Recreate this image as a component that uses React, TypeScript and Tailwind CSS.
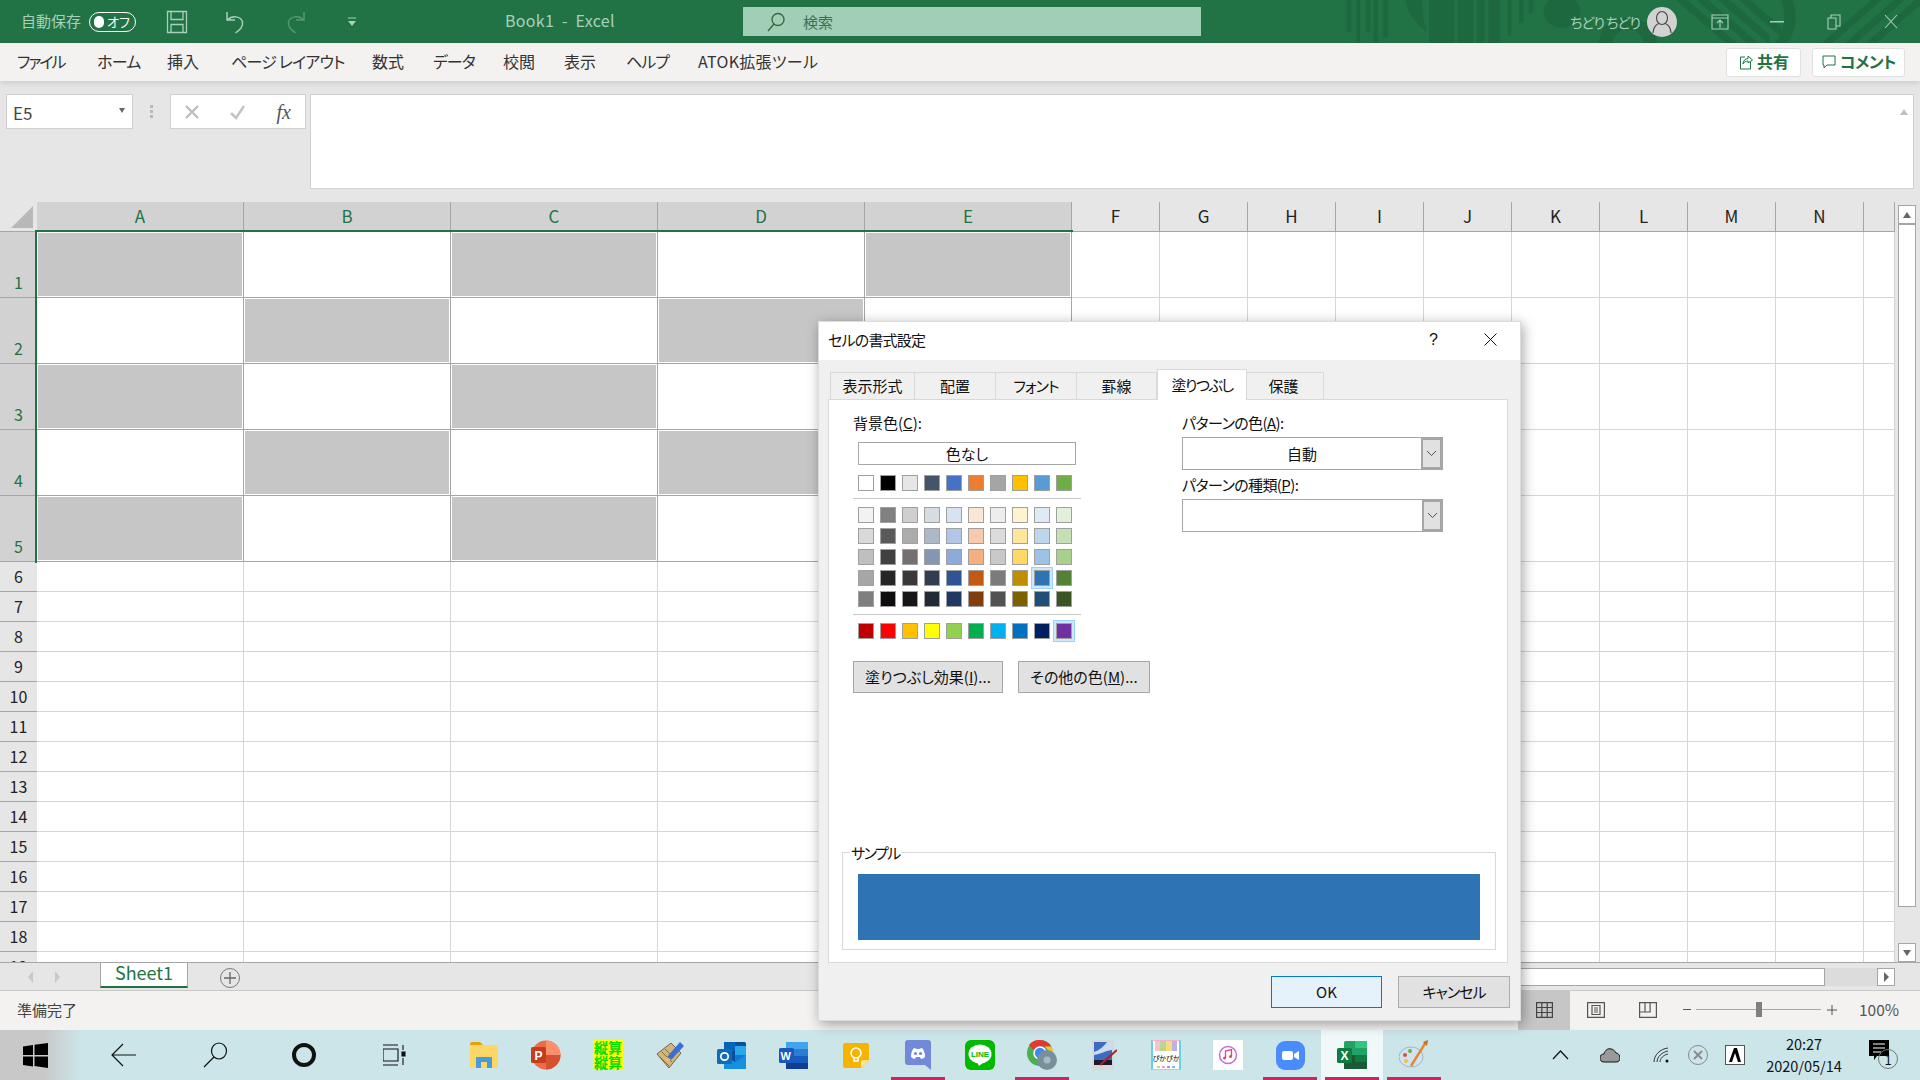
import React from "react";

const COLS = ["A", "B", "C", "D", "E", "F", "G", "H", "I", "J", "K", "L", "M", "N", ""];
const THEME = ["#ffffff", "#000000", "#e7e6e6", "#44546a", "#4472c4", "#ed7d31", "#a5a5a5", "#ffc000", "#5b9bd5", "#70ad47"];
const TINTS = [
  ["#f2f2f2", "#808080", "#d0cece", "#d6dce4", "#d9e2f3", "#fbe5d5", "#ededed", "#fff2cc", "#deeaf6", "#e2efd9"],
  ["#d9d9d9", "#595959", "#aeabab", "#adb9ca", "#b4c6e7", "#f7caac", "#dbdbdb", "#fee599", "#bdd6ee", "#c5e0b3"],
  ["#bfbfbf", "#404040", "#757070", "#8496b0", "#8eaadb", "#f4b083", "#c9c9c9", "#ffd965", "#9cc2e5", "#a8d08d"],
  ["#a6a6a6", "#262626", "#3a3838", "#323e4f", "#2f5496", "#c45911", "#7b7b7b", "#bf8f00", "#2e74b5", "#538135"],
  ["#7f7f7f", "#0d0d0d", "#171616", "#222a35", "#1f3864", "#833c0b", "#525252", "#7f6000", "#1f4e79", "#375623"],
];
const STD = ["#c00000", "#ff0000", "#ffc000", "#ffff00", "#92d050", "#00b050", "#00b0f0", "#0070c0", "#002060", "#7030a0"];
const TABS = [
  { t: "ファイル", c: "w-[80px] tracking-[-2px]" },
  { t: "ホーム", c: "w-[70px] tracking-[-0.7px]" },
  { t: "挿入", c: "w-[64px]" },
  { t: "ページ レイアウト", c: "w-[141px] tracking-[-0.8px]" },
  { t: "数式", c: "w-[61px]" },
  { t: "データ", c: "w-[70px] tracking-[-1px]" },
  { t: "校閲", c: "w-[61px]" },
  { t: "表示", c: "w-[62px]" },
  { t: "ヘルプ", c: "w-[72px] tracking-[-1px]" },
  { t: "ATOK拡張ツール", c: "w-[125px] tracking-[0.3px]" },
];

function Swatch({ color, selected }: { color: string; selected?: boolean }) {
  return (
    <div
      className={
        selected
          ? "w-4 h-4 border border-[#a0a0a0] shadow-[0_0_0_2px_#cce8ff,0_0_0_3px_#99d1ff]"
          : "w-4 h-4 border border-[#a0a0a0]"
      }
      style={{ backgroundColor: color }}
    />
  );
}

function SwatchRow({ colors, selected }: { colors: string[]; selected?: number }) {
  return (
    <div className="flex gap-[6px]">
      {colors.map((c, i) => (
        <Swatch key={i} color={c} selected={selected === i} />
      ))}
    </div>
  );
}

function TitlePattern() {
  return (
    <svg className="absolute left-[1320px] top-0 w-[600px] h-[43px]" viewBox="0 0 1568 129" preserveAspectRatio="none" fill="#1e6840">
      <path d="M70 0h12v95H70zM95 0h10v129H95zM120 0h11v95h-11zM140 0h12v129h-12zM165 0h13v113h-13z" />
      <path d="M222 0h45c-2 30 5 70 12 95c-28-20-50-60-57-95z" />
      <path d="M285 0h65v129h-65zM360 0h40v129h-40zM410 0h20v129h-20zM440 0h30v129h-30zM490 0h10v110h-10zM520 0h12v70h-12zM545 0h12v40h-12z" />
      <circle cx="632" cy="35" r="48" />
      <path d="M730 129c0-50 35-75 75-75s75 25 75 75h-35c0-25-20-40-40-40s-40 15-40 40z" />
      <path d="M930 0h30l130 129h-30zM985 0h30l130 129h-30zM1040 0h30l105 105v24h-5zM1095 0h30l80 80v30z" />
      <path d="M1205 0h30c15 45 10 95-15 129h-30c22-35 30-85 15-129z" />
      <path d="M1440 0h28L1340 129h-28zM1500 0h28L1400 129h-28zM1555 0h13v15L1455 129h-28z" />
    </svg>
  );
}

function TitleBar() {
  const c = "#a8d0ba";
  return (
    <div className="relative h-[43px] bg-[#217346] flex items-center text-[#a8d0ba] overflow-hidden shrink-0">
      <TitlePattern />
      <span className="relative ml-[21px] text-[15px] leading-none pb-[3px] w-[60px] whitespace-nowrap">自動保存</span>
      <div className="relative ml-[8px] w-[47px] h-[20px] rounded-full border-[1.5px] border-white flex items-center pl-[4px] gap-[3px]">
        <div className="w-[10px] h-[12px] rounded-full bg-white" />
        <span className="text-[13px] text-white leading-none">オフ</span>
      </div>
      <svg className="relative ml-[30px]" width="22" height="24" viewBox="0 0 22 24" fill="none" stroke={c} strokeWidth="1.3">
        <path d="M1.5 1.5h19v21h-19zM5 1.5v8h12v-8M5 22.5v-8h12v8" />
      </svg>
      <svg className="relative ml-[36px]" width="22" height="24" viewBox="0 0 22 24" fill="none" stroke={c} strokeWidth="1.5">
        <path d="M3 2v8h8M3.5 10C8 5 17 6 18.500 12c1 5-3 8-7 11" />
      </svg>
      <svg className="relative ml-[39px] opacity-40" width="22" height="24" viewBox="0 0 22 24" fill="none" stroke={c} strokeWidth="1.5">
        <path d="M19 2v8h-8M18.500 10C14 5 5 6 3.500 12c-1 5 3 8 7 11" />
      </svg>
      <svg className="relative ml-[39px]" width="12" height="12" viewBox="0 0 12 12" fill={c}>
        <path d="M2 1.500h8v1H2zM2 5h8L6 10z" />
      </svg>
      <span className="relative ml-[147px] w-[238px] text-[16px] tracking-[0.3px] leading-none pb-[3px] whitespace-pre">Book1  -  Excel</span>
      <div className="relative w-[458px] h-[29px] bg-[#a1cfb5] flex items-center text-[#3d6f54] text-[15px]">
        <svg className="ml-[23px]" width="20" height="20" viewBox="0 0 20 20" fill="none" stroke="#35694c" strokeWidth="1.4">
          <circle cx="12" cy="7.500" r="6" />
          <path d="M8 12L2 19" />
        </svg>
        <span className="ml-[17px] leading-none">検索</span>
      </div>
      <span className="relative ml-[369px] w-[64px] text-[14px] tracking-[-1px] leading-none whitespace-nowrap">ちどり ちどり</span>
      <div className="relative ml-[13px] w-[30px] h-[30px] rounded-full bg-[#d2d2d2] flex items-center justify-center">
        <svg width="22" height="24" viewBox="0 0 22 24" fill="none" stroke="#444" strokeWidth="1.1">
          <ellipse cx="11" cy="8" rx="5.500" ry="6.500" />
          <path d="M2 23c0-6 4-9 6-9.500M20 23c0-6-4-9-6-9.500" />
        </svg>
      </div>
      <svg className="relative ml-[34px]" width="18" height="16" viewBox="0 0 18 16" fill="none" stroke={c} strokeWidth="1.100">
        <path d="M1 1h16v14H1zM1 4h16M9 14V7M6 9l3-3 3 3" />
      </svg>
      <svg className="relative ml-[41px]" width="14" height="2" viewBox="0 0 14 2" fill={c}>
        <path d="M0 0h14v1.500H0z" />
      </svg>
      <svg className="relative ml-[43px]" width="14" height="16" viewBox="0 0 14 16" fill="none" stroke={c} strokeWidth="1.100">
        <path d="M1 4h8v11H1zM4 4V1h9v11H9" />
      </svg>
      <svg className="relative ml-[43px]" width="14" height="15" viewBox="0 0 14 15" fill="none" stroke={c} strokeWidth="1.100">
        <path d="M1 1l12 13M13 1L1 14" />
      </svg>
    </div>
  );
}

function RibbonTabs() {
  return (
    <div className="h-[38px] bg-[#f3f2f1] flex items-center pl-[17px] shrink-0 text-[#333] relative z-10 shadow-[0_2px_6px_rgba(0,0,0,0.12)]">
      <div className="flex text-[16px] pb-[2px]">
        {TABS.map((t) => (
          <span key={t.t} className={"whitespace-nowrap leading-none " + t.c}>{t.t}</span>
        ))}
      </div>
      <div className="ml-auto mr-[15px] flex gap-[11px] text-[#217346] font-bold text-[16px]">
        <div className="w-[75px] h-[29px] bg-white rounded-[3px] border border-[#e1e1e1] flex items-center justify-center gap-[3px]">
          <svg width="16" height="16" viewBox="0 0 16 16" fill="none" stroke="#217346" strokeWidth="1">
            <path d="M7 3H2.500v12h10V8M5 10c0-3 2-5.500 5-5.500V2l4.500 4-4.500 3V7c-2 0-4 1-5 3z" />
          </svg>
          <span className="leading-none pb-[2px]">共有</span>
        </div>
        <div className="w-[93px] h-[29px] bg-white rounded-[3px] border border-[#e1e1e1] flex items-center justify-center gap-[3px]">
          <svg width="16" height="16" viewBox="0 0 16 16" fill="none" stroke="#217346" strokeWidth="1">
            <path d="M2 2h12v9H6l-3 3v-3H2z" />
          </svg>
          <span className="leading-none pb-[2px] tracking-[-0.5px]">コメント</span>
        </div>
      </div>
    </div>
  );
}

function FormulaBar() {
  return (
    <div className="h-[121px] bg-[#e6e6e6] flex items-start pt-[13px] pl-[6px] shrink-0">
      <div className="w-[127px] h-[35px] bg-white border border-[#d0d0d0] flex items-center pl-[6px] pr-[7px] justify-between text-[#444]">
        <span className="text-[17px] leading-none pt-[2px]">E5</span>
        <span className="w-0 h-0 border-x-[3.500px] border-x-transparent border-t-[5px] border-t-[#666] mb-[3px]" />
      </div>
      <div className="w-[37px] h-[35px] flex flex-col items-center justify-center gap-[2px]">
        <span className="w-[3px] h-[3px] bg-[#b8b8b8]" />
        <span className="w-[3px] h-[3px] bg-[#b8b8b8]" />
        <span className="w-[3px] h-[3px] bg-[#b8b8b8]" />
      </div>
      <div className="w-[136px] h-[35px] bg-white border border-[#d0d0d0] flex items-center justify-between pl-[13px] pr-[14px]">
        <svg width="16" height="16" viewBox="0 0 16 16" fill="none" stroke="#b9b9b9" strokeWidth="2">
          <path d="M2 2l12 12M14 2L2 14" />
        </svg>
        <svg width="18" height="16" viewBox="0 0 18 16" fill="none" stroke="#c4c4c4" strokeWidth="2.500">
          <path d="M2 9l5 5L15 2" />
        </svg>
        <span className="font-['Liberation_Serif',serif] italic text-[20px] text-[#555] leading-none">fx</span>
      </div>
      <div className="relative ml-[4px] w-[1604px] h-[95px] bg-white border border-[#d0d0d0]">
        <span className="absolute right-[5px] top-[14px] w-0 h-0 border-x-[4px] border-x-transparent border-b-[6px] border-b-[#c0c0c0]" />
      </div>
    </div>
  );
}

function Sheet() {
  const rows = Array.from({ length: 19 }, (_, i) => i + 1);
  return (
    <div className="relative h-[760px] flex shrink-0 overflow-hidden">
      <div className="grid grid-cols-[37px_repeat(5,207px)_repeat(9,88px)_31px] grid-rows-[30px_repeat(5,66px)_repeat(14,30px)] w-[1895px] bg-white">
        <div className="bg-[#e6e6e6] relative border-b border-[#a6a6a6]">
          <div className="absolute left-[11px] top-[4px] w-[22px] h-[22px] bg-[#b8b8b8] [clip-path:polygon(100%_0,100%_100%,0_100%)]" />
        </div>
        {COLS.map((c, i) => (
          <div
            key={i}
            className={
              i < 5
                ? "bg-[#d2d2d2] border-r border-b border-[#a6a6a6] flex items-center justify-center text-[#217346] text-[17px] leading-none pb-[3px]"
                : "bg-[#e6e6e6] border-r border-b border-[#a6a6a6] flex items-center justify-center text-[#222] text-[17px] leading-none pb-[3px]"
            }
          >
            {c}
          </div>
        ))}
        {rows.map((r) => (
          <React.Fragment key={r}>
            <div
              className={
                r <= 5
                  ? "bg-[#d2d2d2] border-b border-[#a6a6a6] flex items-end justify-center text-[#217346] text-[16px] leading-[22px] pb-[4px]"
                  : "bg-[#e6e6e6] border-b border-[#a6a6a6] flex items-center justify-center text-[#222] text-[16px] leading-none pb-[2px]"
              }
            >
              {r}
            </div>
            {COLS.map((_, c) => {
              const inBlock = r <= 5 && c < 5;
              const gray = inBlock && (r - 1 + c) % 2 === 0;
              return (
                <div
                  key={c}
                  className={
                    inBlock
                      ? "border-r border-b border-[#a6a6a6] bg-white"
                      : "border-r border-b border-[#d6d6d6] bg-white"
                  }
                >
                  {gray && <div className="h-full border border-white bg-[#c6c6c6]" />}
                </div>
              );
            })}
          </React.Fragment>
        ))}
      </div>
      <div className="absolute left-[35px] top-[28px] w-[1038px] h-[333px] border-t-2 border-l-2 border-[#217346] pointer-events-none" />
      <div className="w-[25px] bg-[#e6e6e6] flex flex-col pl-[3px] pr-[4px] pt-[3px]">
        <div className="h-[19px] bg-white border border-[#a6a6a6] flex items-center justify-center">
          <span className="w-0 h-0 border-x-[4px] border-x-transparent border-b-[6px] border-b-[#666]" />
        </div>
        <div className="h-[683px] bg-white border border-[#a6a6a6] mt-0" />
        <div className="h-[36px]" />
        <div className="h-[19px] bg-white border border-[#a6a6a6] flex items-center justify-center">
          <span className="w-0 h-0 border-x-[4px] border-x-transparent border-t-[6px] border-t-[#666]" />
        </div>
      </div>
    </div>
  );
}

function SheetTabs() {
  return (
    <div className="h-[28px] bg-[#e6e6e6] border-t border-[#a6a6a6] flex items-start shrink-0">
      <div className="w-[100px] h-full flex items-center pl-[28px] gap-[22px]">
        <span className="w-0 h-0 border-y-[6px] border-y-transparent border-r-[5px] border-r-[#c8c8c8]" />
        <span className="w-0 h-0 border-y-[6px] border-y-transparent border-l-[5px] border-l-[#c8c8c8]" />
      </div>
      <div className="w-[88px] h-[25px] bg-white border-x border-[#a6a6a6] border-b-[2px] border-b-[#217346] flex items-center justify-center text-[#217346] text-[18px] leading-none pb-[5px]">
        Sheet1
      </div>
      <div className="ml-[32px] mt-[5px] w-[20px] h-[20px] rounded-full border border-[#7a7a7a] flex items-center justify-center text-[#666]">
        <svg width="12" height="12" viewBox="0 0 12 12" stroke="#666" strokeWidth="1.300">
          <path d="M6 0v12M0 6h12" />
        </svg>
      </div>
      <div className="ml-[872px] mt-[5px] w-[713px] h-[18px] bg-white border-y border-r border-[#a6a6a6]" />
      <div className="w-[52px] mt-[5px] h-[18px] bg-[#dcdcdc]" />
      <div className="w-[18px] mt-[5px] h-[18px] bg-white border border-[#a6a6a6] flex items-center justify-center">
        <span className="w-0 h-0 border-y-[5px] border-y-transparent border-l-[5px] border-l-[#666]" />
      </div>
    </div>
  );
}

function StatusBar() {
  return (
    <div className="h-[40px] bg-[#f3f2f1] border-t border-[#c8c8c8] flex items-center shrink-0 text-[#444]">
      <span className="ml-[17px] text-[15px] leading-none pb-[2px]">準備完了</span>
      <div className="ml-auto w-[402px] h-full flex items-center">
        <div className="w-[52px] h-full bg-[#c6c6c6] flex items-center justify-center pb-[2px]">
          <svg width="17" height="16" viewBox="0 0 17 16" fill="none" stroke="#444" strokeWidth="1.200">
            <path d="M.6.600h15.800v14.800H.6zM.6 5.500h15.800M.6 10.500h15.800M5.800.6v14.800M11.200.6v14.800" />
          </svg>
        </div>
        <div className="flex items-center pb-[2px]">
          <svg className="ml-[17px]" width="18" height="16" viewBox="0 0 18 16" fill="none" stroke="#555" strokeWidth="1.200">
            <path d="M.6.600h16.800v14.800H.6zM5 3.500h8v9H5zM7 6h4M7 8h4M7 10h4" />
          </svg>
          <svg className="ml-[34px]" width="18" height="16" viewBox="0 0 18 16" fill="none" stroke="#555" strokeWidth="1.200">
            <path d="M.6.600h16.800v14.800H.6zM.6 10h10.500V.6M6 .6V10" />
          </svg>
          <div className="ml-[26px] w-[8px] h-px bg-[#555]" />
          <div className="relative ml-[5px] w-[125px] h-px bg-[#a6a6a6]">
            <div className="absolute left-[60px] -top-[7px] w-[6px] h-[15px] bg-[#808080]" />
          </div>
          <svg className="ml-[6px]" width="10" height="10" viewBox="0 0 10 10" stroke="#555" strokeWidth="1">
            <path d="M5 0v10M0 5h10" />
          </svg>
          <span className="ml-[22px] text-[15.500px] leading-none text-[#555]">100%</span>
        </div>
      </div>
    </div>
  );
}

function AppIcon({ children, active, run }: { children: React.ReactNode; active?: boolean; run?: boolean }) {
  return (
    <div className={active ? "relative w-[62px] h-[50px] flex items-center justify-center bg-[#f1f8f9]" : "relative w-[62px] h-[50px] flex items-center justify-center"}>
      {children}
      {run && <div className="absolute left-[4px] right-[4px] bottom-0 h-[3px] bg-[#c8265e]" />}
    </div>
  );
}

function Taskbar() {
  return (
    <div className="h-[50px] bg-[#cce5e8] flex items-center shrink-0 text-[#111]">
      <div className="w-[80px] h-full flex items-center pl-[23px] bg-[linear-gradient(90deg,#c8c8c8_55%,#cce5e8)]">
        <svg width="25" height="25" viewBox="0 0 25 25" fill="#000">
          <path d="M0 3.500l10-1.500v10H0zM11.500 1.800L25 0v12H11.500zM0 13.500h10v10L0 22zM11.500 13.500H25V25l-13.500-2z" />
        </svg>
      </div>
      <svg className="ml-[31px]" width="26" height="26" viewBox="0 0 26 26" fill="none" stroke="#111" strokeWidth="1.200">
        <path d="M12 2L1 13l11 11M1 13h24" />
      </svg>
      <svg className="ml-[65px]" width="26" height="26" viewBox="0 0 26 26" fill="none" stroke="#111" strokeWidth="1.200">
        <ellipse cx="17" cy="9" rx="7.500" ry="8" />
        <path d="M12 15L2 25" />
      </svg>
      <div className="ml-[64px] w-[24px] h-[24px] rounded-full border-[4px] border-[#111]" />
      <svg className="ml-[67px]" width="24" height="24" viewBox="0 0 24 24" fill="none" stroke="#111" strokeWidth="1.100">
        <path d="M0 2h15M0 22h15M0 6h15v12H0M0 6v12M20 2v5M20 15v7" />
        <rect x="19" y="9" width="3" height="4" fill="#111" />
      </svg>
      <div className="ml-[46px] flex">
        <AppIcon>
          <svg width="28" height="26" viewBox="0 0 28 26">
            <path d="M0 2c0-1 1-2 2-2h8l3 3h-13z" fill="#e6a00a" />
            <path d="M0 3h26c1 0 2 1 2 2v19c0 1-1 2-2 2H2c-1 0-2-1-2-2z" fill="#fcd666" />
            <path d="M6 26V15h16v11h-5v-6h-6v6z" fill="#4a9bdb" />
          </svg>
        </AppIcon>
        <AppIcon>
          <svg width="30" height="30" viewBox="0 0 30 30">
            <circle cx="15" cy="15" r="14.500" fill="#ed6c47" />
            <path d="M15 .5A14.500 14.500 0 0 1 29.500 15H15z" fill="#ff8f6b" />
            <path d="M15 15h14.500A14.500 14.500 0 0 1 15 29.500z" fill="#d35230" />
            <rect x="0" y="7" width="15" height="16" rx="1.500" fill="#c43e1c" />
            <text x="3.500" y="20" fontSize="12" fontWeight="700" fill="#fff" fontFamily="Liberation Sans">P</text>
          </svg>
        </AppIcon>
        <AppIcon>
          <div className="w-[30px] h-[30px] bg-[#ffff00] text-[#00e000] font-bold text-[14px] leading-[15px] text-center whitespace-nowrap">
            縦算<br />縦算
          </div>
        </AppIcon>
        <AppIcon>
          <svg width="30" height="30" viewBox="0 0 30 30">
            <path d="M2 14L16 3l10 10-12 15z" fill="#cfb57e" stroke="#7c6238" strokeWidth="1" />
            <path d="M4 16l10 10M7 12l10 10M10 9l9 9" stroke="#8d6f3f" strokeWidth="1" />
            <path d="M12 17L25 2l4 4-13 14z" fill="#3a6fd8" />
            <path d="M10 21l2-4 4 3z" fill="#f0c050" />
          </svg>
        </AppIcon>
        <AppIcon>
          <svg width="30" height="29" viewBox="0 0 30 29">
            <rect x="7" y="1" width="22" height="27" rx="1.500" fill="#0a4f9c" />
            <rect x="7" y="1" width="11" height="9" fill="#0364b8" />
            <rect x="18" y="5" width="11" height="9" fill="#28a8ea" />
            <rect x="18" y="14" width="11" height="14" fill="#0f78d4" />
            <path d="M7 14l11 7 11-7v14H7z" fill="#1490df" />
            <rect x="0" y="8" width="15" height="15" rx="1.500" fill="#0f6cbd" />
            <circle cx="7.500" cy="15.500" r="3.700" fill="none" stroke="#fff" strokeWidth="1.800" />
          </svg>
        </AppIcon>
        <AppIcon>
          <svg width="30" height="29" viewBox="0 0 30 29">
            <rect x="7" y="1" width="22" height="27" rx="1.500" fill="#2b7cd3" />
            <rect x="7" y="1" width="22" height="7" fill="#41a5ee" />
            <rect x="7" y="15" width="22" height="7" fill="#185abd" />
            <rect x="7" y="22" width="22" height="6" fill="#103f91" />
            <rect x="0" y="7" width="15" height="15" rx="1.500" fill="#185abd" />
            <text x="1.500" y="19" fontSize="11" fontWeight="700" fill="#fff" fontFamily="Liberation Sans">W</text>
          </svg>
        </AppIcon>
        <AppIcon>
          <svg width="26" height="25" viewBox="0 0 26 25">
            <path d="M2 0h22c1 0 2 1 2 2v15l-8 8H2c-1 0-2-1-2-2V2C0 1 1 0 2 0z" fill="#f4b400" />
            <path d="M26 17l-8 8v-6c0-1 1-2 2-2z" fill="#fde293" />
            <circle cx="13" cy="10" r="5" fill="none" stroke="#fff" strokeWidth="1.500" />
            <path d="M11 15v3h4v-3" fill="none" stroke="#fff" strokeWidth="1.500" />
          </svg>
        </AppIcon>
        <AppIcon run>
          <svg width="26" height="30" viewBox="0 0 26 30">
            <path d="M3 0h20c2 0 3 1 3 3v27l-6-5H3c-2 0-3-1-3-3V3C0 1 1 0 3 0z" fill="#7289da" />
            <path d="M6 17c0-4 1-7 3-9l3 1h2l3-1c2 2 3 5 3 9-1 1-3 2-4 2l-1-2h-4l-1 2c-1 0-3-1-4-2z" fill="#fff" />
            <circle cx="10.500" cy="13.500" r="1.600" fill="#7289da" />
            <circle cx="15.500" cy="13.500" r="1.600" fill="#7289da" />
          </svg>
        </AppIcon>
        <AppIcon>
          <svg width="30" height="30" viewBox="0 0 30 30">
            <rect width="30" height="30" rx="6" fill="#00b900" />
            <ellipse cx="15" cy="14" rx="11.500" ry="9.500" fill="#fff" />
            <path d="M12 22l2 4 5-4z" fill="#fff" />
            <text x="15" y="17" fontSize="8" fontWeight="700" fill="#00b900" textAnchor="middle" fontFamily="Liberation Sans">LINE</text>
          </svg>
        </AppIcon>
        <AppIcon run>
          <svg width="32" height="32" viewBox="0 0 32 32">
            <circle cx="14" cy="14" r="13" fill="#4caf50" />
            <path d="M14 1a13 13 0 0 1 11.300 6.500H14A6.500 6.500 0 0 0 8 11.500L3 6A13 13 0 0 1 14 1z" fill="#e5392f" />
            <path d="M25.300 7.500A13 13 0 0 1 14 27l5-9a6.500 6.500 0 0 0 0-10.500z" fill="#fbc02d" />
            <circle cx="14" cy="14" r="6" fill="#4285f4" stroke="#fff" strokeWidth="1.500" />
            <circle cx="21" cy="21" r="10" fill="#78909c" />
            <circle cx="21" cy="21" r="3.500" fill="#a9bac2" />
          </svg>
        </AppIcon>
        <AppIcon>
          <svg width="26" height="30" viewBox="0 0 26 30">
            <rect x="1" y="0" width="22" height="30" fill="#d8d8d8" />
            <rect x="3" y="2" width="18" height="18" fill="#3c6cc0" />
            <path d="M3 12c6-2 10-6 13-10h5v8c-5 0-11 4-18 5z" fill="#c8dcf4" />
            <rect x="3" y="20" width="18" height="5" fill="#1a1a2a" />
            <path d="M9 25L26 10" stroke="#b01e2e" strokeWidth="2" />
          </svg>
        </AppIcon>
        <AppIcon>
          <div className="w-[30px] h-[30px] bg-white border-x-2 border-x-[#6ad0ea] border-y border-y-[#f0b0d0] flex flex-col items-center justify-between overflow-hidden">
            <svg width="26" height="10" viewBox="0 0 26 10">
              <rect x="2" y="0" width="5" height="10" fill="#f9c0d0" />
              <rect x="7" y="0" width="6" height="10" fill="#b5d88a" />
              <rect x="13" y="0" width="6" height="10" fill="#f7dd7a" />
              <rect x="19" y="0" width="5" height="10" fill="#c0b0e8" />
            </svg>
            <span className="text-[7px] leading-none text-black whitespace-nowrap">ぴかぴか</span>
            <div className="flex gap-[2px] pb-[1px]">
              <span className="w-[3px] h-[2px] bg-[#f7c850]" />
              <span className="w-[3px] h-[2px] bg-[#f5a0c0]" />
              <span className="w-[3px] h-[2px] bg-[#b090e0]" />
              <span className="w-[3px] h-[2px] bg-[#70c8e8]" />
            </div>
          </div>
        </AppIcon>
        <AppIcon>
          <svg width="30" height="30" viewBox="0 0 30 30">
            <rect width="30" height="30" fill="#fff" />
            <circle cx="15" cy="15" r="8.500" fill="#fff" stroke="#c86cd8" strokeWidth="1.500" />
            <path d="M12.500 18v-7l6-1.500v7" fill="none" stroke="#e0457a" strokeWidth="1.300" />
            <circle cx="11.500" cy="18" r="1.500" fill="#e0457a" />
            <circle cx="17.500" cy="16.500" r="1.500" fill="#e0457a" />
          </svg>
        </AppIcon>
        <AppIcon run>
          <svg width="29" height="29" viewBox="0 0 29 29">
            <rect width="29" height="29" rx="9" fill="#4a8cff" />
            <rect x="6" y="10" width="11" height="9" rx="2" fill="#fff" />
            <path d="M18 13l5-3v9l-5-3z" fill="#fff" />
          </svg>
        </AppIcon>
        <AppIcon active run>
          <svg width="30" height="28" viewBox="0 0 30 28">
            <rect x="7" y="0" width="23" height="28" rx="1.500" fill="#21a366" />
            <rect x="18" y="0" width="12" height="7" fill="#33c481" />
            <rect x="18" y="14" width="12" height="7" fill="#107c41" />
            <rect x="7" y="14" width="11" height="7" fill="#185c37" />
            <rect x="7" y="21" width="23" height="7" fill="#185c37" />
            <rect x="0" y="7" width="15" height="15" rx="1.500" fill="#107c41" />
            <text x="3.500" y="19" fontSize="12" fontWeight="700" fill="#fff" fontFamily="Liberation Sans">X</text>
          </svg>
        </AppIcon>
        <AppIcon run>
          <svg width="30" height="30" viewBox="0 0 30 30">
            <ellipse cx="12" cy="17" rx="12" ry="10" fill="#cfe4f0" stroke="#9bb8c8" strokeWidth="1" />
            <circle cx="6" cy="15" r="2" fill="#e05040" />
            <circle cx="11" cy="11" r="2" fill="#70b040" />
            <circle cx="7" cy="21" r="2" fill="#f0c040" />
            <path d="M12 26L27 2" stroke="#e08a30" strokeWidth="2.500" />
            <path d="M24 2l5-2-1 6z" fill="#c87020" />
          </svg>
        </AppIcon>
      </div>
      <svg className="ml-[107px]" width="17" height="10" viewBox="0 0 17 10" fill="none" stroke="#111" strokeWidth="1.200">
        <path d="M1 9l7.500-8L16 9" />
      </svg>
      <svg className="ml-[31px]" width="20" height="15" viewBox="0 0 20 15">
        <path d="M4 14C1 14 0 12 0 10c0-3 2-4 4-4C5 2 8 0 11 1c2 0 4 2 5 4 2 0 4 2 4 5 0 2-1 4-4 4z" fill="#999" stroke="#111" strokeWidth="1" />
      </svg>
      <svg className="ml-[33px]" width="16" height="16" viewBox="0 0 16 16" fill="none" stroke="#333" strokeWidth="1">
        <path d="M1 15c0-7 6-13 14-14M4 15c0-5 5-10 11-11M7 15c0-3 3-7 8-8" />
        <circle cx="14" cy="14" r="1.500" fill="#111" stroke="none" />
      </svg>
      <div className="ml-[19px] w-[20px] h-[20px] rounded-full border border-[#888] flex items-center justify-center">
        <svg width="10" height="10" viewBox="0 0 10 10" stroke="#888" strokeWidth="1.800">
          <path d="M1 1l8 8M9 1L1 9" />
        </svg>
      </div>
      <div className="ml-[17px] w-[20px] h-[20px] border border-[#555] bg-white flex items-center justify-center">
        <svg width="14" height="16" viewBox="0 0 14 16">
          <path d="M1 15L6 1h3l4 14h-3L7 6l-3 9z" fill="#000" />
        </svg>
      </div>
      <div className="ml-[21px] w-[76px] flex flex-col items-center text-[14.500px] leading-none text-[#111] gap-[7px]">
        <span className="whitespace-nowrap">20:27</span>
        <span className="whitespace-nowrap">2020/05/14</span>
      </div>
      <div className="relative ml-[27px] w-[30px] h-[30px]">
        <svg className="absolute left-0 top-0" width="20" height="21" viewBox="0 0 20 21">
          <path d="M0 0h20v16H8l-3 4v-4H0z" fill="#000" />
          <path d="M4 4h12M4 8h12M4 12h8" stroke="#fff" strokeWidth="1.200" />
        </svg>
        <div className="absolute left-[9px] top-[9px] w-[20px] h-[20px] rounded-full border border-[#777] flex items-center justify-center text-[13px] leading-none">1</div>
      </div>
    </div>
  );
}

function DialogTab({ label, w, active }: { label: string; w: string; active?: boolean }) {
  return (
    <div
      className={
        active
          ? "h-[31px] -mb-px bg-white border-x border-t border-[#d9d9d9] flex items-center justify-center text-[15px] leading-none pb-[2px] relative z-10 " + w
          : "h-[27px] bg-[#f0f0f0] border-r border-t border-[#d9d9d9] first:border-l flex items-center justify-center text-[15px] leading-none pb-[2px] " + w
      }
    >
      {label}
    </div>
  );
}

function SelectBox({ text, btn }: { text: string; btn: string }) {
  return (
    <div className="w-[261px] h-[33px] border border-[#a6a6a6] flex bg-white">
      <div className="flex-1 flex items-center justify-center text-[15px] leading-none">{text}</div>
      <div className={"border-[2px] border-[#a6a6a6] bg-[#e1e1e1] flex items-center justify-center " + btn}>
        <svg width="11" height="7" viewBox="0 0 11 7" fill="none" stroke="#555" strokeWidth="1">
          <path d="M1 1l4.500 4.500L10 1" />
        </svg>
      </div>
    </div>
  );
}

function Dialog() {
  return (
    <div className="absolute left-[818px] top-[321px] w-[703px] h-[700px] bg-[#f0f0f0] border border-[#dcdcdc] shadow-[2px_3px_12px_rgba(0,0,0,0.35)] flex flex-col text-[#111]">
      <div className="h-[38px] bg-white flex items-center pl-[9px] shrink-0 pb-[3px]">
        <span className="text-[15px] leading-none tracking-[-0.8px]">セルの書式設定</span>
        <span className="ml-auto text-[16px] leading-none font-['Liberation_Sans',sans-serif]">?</span>
        <svg className="ml-[46px] mr-[23px]" width="13" height="13" viewBox="0 0 13 13" fill="none" stroke="#111" strokeWidth="1">
          <path d="M.5.500l12 12M12.500.500l-12 12" />
        </svg>
      </div>
      <div className="h-[39px] flex items-end pl-[11px] shrink-0">
        <DialogTab label="表示形式" w="w-[85px]" />
        <DialogTab label="配置" w="w-[81px]" />
        <DialogTab label="フォント" w="w-[81px] tracking-[-1px]" />
        <DialogTab label="罫線" w="w-[80px]" />
        <DialogTab label="塗りつぶし" w="w-[90px] tracking-[-1.500px]" active />
        <DialogTab label="保護" w="w-[77px] pr-[3px]" />
      </div>
      <div className="ml-[9px] mr-[12px] h-[564px] bg-white border border-[#d9d9d9] flex flex-col justify-between shrink-0">
        <div className="flex pt-[13px] pl-[24px]">
          <div className="w-[329px]">
            <div className="h-[20px] text-[15px] leading-[20px] whitespace-nowrap">背景色(<u>C</u>):</div>
            <div className="ml-[5px] mt-[9px] w-[218px] h-[23px] border border-[#a6a6a6] flex items-center justify-center text-[15px] leading-none pb-[1px]">色なし</div>
            <div className="ml-[5px] mt-[10px]"><SwatchRow colors={THEME} /></div>
            <div className="mt-[7px] w-[228px] h-px bg-[#c8c8c8]" />
            <div className="ml-[5px] mt-[8px] flex flex-col gap-[5px]">
              {TINTS.map((r, i) => (
                <SwatchRow key={i} colors={r} selected={i === 3 ? 8 : undefined} />
              ))}
            </div>
            <div className="mt-[7px] w-[228px] h-px bg-[#c8c8c8]" />
            <div className="ml-[5px] mt-[8px]"><SwatchRow colors={STD} selected={9} /></div>
            <div className="mt-[22px] flex gap-[15px]">
              <div className="w-[150px] h-[32px] bg-[#e1e1e1] border border-[#a6a6a6] flex items-center justify-center text-[15px] leading-none whitespace-nowrap pb-[2px]">塗りつぶし効果(<u>I</u>)...</div>
              <div className="w-[132px] h-[32px] bg-[#e1e1e1] border border-[#a6a6a6] flex items-center justify-center text-[15px] leading-none whitespace-nowrap pb-[2px]">その他の色(<u>M</u>)...</div>
            </div>
          </div>
          <div className="w-[261px]">
            <div className="h-[20px] text-[15px] leading-[20px] whitespace-nowrap tracking-[-0.6px]">パターンの色(<u>A</u>):</div>
            <div className="mt-[4px]"><SelectBox text="自動" btn="w-[21px]" /></div>
            <div className="mt-[5px] h-[20px] text-[15px] leading-[20px] whitespace-nowrap tracking-[-0.6px]">パターンの種類(<u>P</u>):</div>
            <div className="mt-[4px]"><SelectBox text="" btn="w-[20px]" /></div>
          </div>
        </div>
        <div className="relative ml-[13px] mr-[11px] mb-[12px] h-[98px] border border-[#d9d9d9] pt-[21px] px-[15px]">
          <span className="absolute left-[7px] -top-[9px] bg-white px-[1px] text-[15px] leading-[18px] tracking-[-1.500px]">サンプル</span>
          <div className="h-[66px] bg-[#2e74b5]" />
        </div>
      </div>
      <div className="mt-[13px] flex justify-end gap-[16px] mr-[10px]">
        <div className="w-[111px] h-[32px] bg-[#e5f1fb] border border-[#0078d7] flex items-center justify-center text-[15px] leading-none pb-[1px]">OK</div>
        <div className="w-[112px] h-[32px] bg-[#e1e1e1] border border-[#adadad] flex items-center justify-center text-[15px] leading-none pb-[1px] tracking-[-1px]">キャンセル</div>
      </div>
    </div>
  );
}

export default function App() {
  return (
    <div className="relative w-[1920px] h-[1080px] overflow-hidden flex flex-col bg-[#e6e6e6] font-['Noto_Sans_CJK_JP','Noto_Sans',sans-serif] [font-feature-settings:'palt']">
      <TitleBar />
      <RibbonTabs />
      <FormulaBar />
      <Sheet />
      <SheetTabs />
      <StatusBar />
      <Taskbar />
      <Dialog />
    </div>
  );
}
